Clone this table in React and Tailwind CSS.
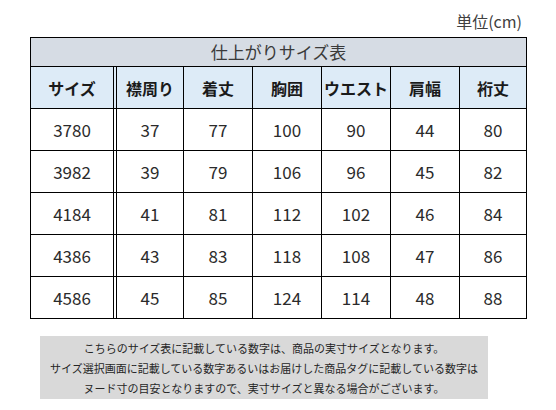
const font = "font-['Noto_Sans_CJK_JP','Noto_Sans',sans-serif]";

const headers = ["サイズ", "襟周り", "着丈", "胸囲", "ウエスト", "肩幅", "裄丈"];

const rows = [
  ["3780", "37", "77", "100", "90", "44", "80"],
  ["3982", "39", "79", "106", "96", "45", "82"],
  ["4184", "41", "81", "112", "102", "46", "84"],
  ["4386", "43", "83", "118", "108", "47", "86"],
  ["4586", "45", "85", "124", "114", "48", "88"],
];

// widths include the left border of each cell
const cellClasses = [
  "w-[82px]",
  "w-[70px] border-l-4 border-double border-black",
  "w-[69px] border-l border-black",
  "w-[69px] border-l border-black",
  "w-[69px] border-l border-black",
  "w-[69px] border-l border-black",
  "w-[67px] border-l border-black",
];

function Row({ cells, header }) {
  return (
    <div
      className={
        "flex h-[42px] border-t border-black " +
        (header ? "bg-[#ddebf7]" : "bg-white")
      }
    >
      {cells.map((value, i) => (
        <div
          key={i}
          className={
            "flex items-center justify-center " +
            cellClasses[i] +
            (header
              ? " text-[16px] font-bold text-[#1a1a1a]"
              : " text-[17px] text-[#2b2b2b]")
          }
        >
          {value}
        </div>
      ))}
    </div>
  );
}

export default function App() {
  return (
    <div className={"h-[410px] w-[556px] bg-white " + font}>
      <div className="flex h-[37px] items-end justify-end pr-[34px] pb-[6px]">
        <span className="text-[16px] leading-[20px] text-[#404040]">単位(cm)</span>
      </div>

      <div className="ml-[30px] w-[497px] border border-black">
        <div className="flex h-[28px] items-center justify-center bg-[#d6dce4] text-[17px] text-[#3a3a3a]">
          仕上がりサイズ表
        </div>
        <Row cells={headers} header />
        {rows.map((row) => (
          <Row key={row[0]} cells={row} />
        ))}
      </div>

      <div className="ml-[40px] mt-[17px] flex h-[63px] w-[448px] flex-col items-center justify-center bg-[#d9d9d9] text-[11px] leading-[20px] text-[#262626]">
        <p>こちらのサイズ表に記載している数字は、商品の実寸サイズとなります。</p>
        <p>サイズ選択画面に記載している数字あるいはお届けした商品タグに記載している数字は</p>
        <p>ヌード寸の目安となりますので、実寸サイズと異なる場合がございます。</p>
      </div>
    </div>
  );
}
